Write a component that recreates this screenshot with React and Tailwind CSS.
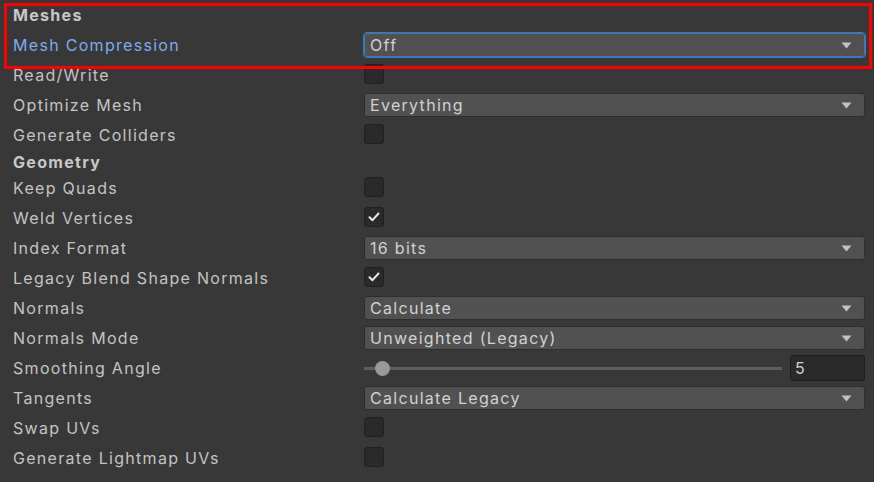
import React from "react";

const rows = [
  { type: "heading", label: "Meshes", first: true },
  { type: "select", label: "Mesh Compression", value: "Off", focused: true },
  { type: "check", label: "Read/Write", checked: false },
  { type: "select", label: "Optimize Mesh", value: "Everything" },
  { type: "check", label: "Generate Colliders", checked: false },
  { type: "heading", label: "Geometry" },
  { type: "check", label: "Keep Quads", checked: false },
  { type: "check", label: "Weld Vertices", checked: true },
  { type: "select", label: "Index Format", value: "16 bits" },
  { type: "check", label: "Legacy Blend Shape Normals", checked: true },
  { type: "select", label: "Normals", value: "Calculate" },
  { type: "select", label: "Normals Mode", value: "Unweighted (Legacy)" },
  { type: "slider", label: "Smoothing Angle", value: "5" },
  { type: "select", label: "Tangents", value: "Calculate Legacy" },
  { type: "check", label: "Swap UVs", checked: false },
  { type: "check", label: "Generate Lightmap UVs", checked: false },
];

function Arrow() {
  return (
    <svg width="11" height="7" viewBox="0 0 11 7" className="shrink-0">
      <path d="M0.5 0.5 L10.5 0.5 L5.5 6.5 Z" fill="#c2c2c2" />
    </svg>
  );
}

function Select({ value, focused }) {
  return (
    <div
      className={`flex h-[24px] flex-1 items-center justify-between rounded-[3px] border bg-[#515151] pl-[5px] pr-[12px] ${
        focused ? "border-[#3a79bb] outline outline-1 outline-[#3a79bb]" : "border-[#2e2e2e]"
      }`}
    >
      <span className="text-[#d2d2d2]">{value}</span>
      <Arrow />
    </div>
  );
}

function Check({ checked }) {
  return (
    <div className="mb-[2px] flex h-[20px] w-[20px] items-center justify-center rounded-[3px] border border-[#202020] bg-[#2a2a2a]">
      {checked && (
        <svg width="12" height="10" viewBox="0 0 12 10">
          <path d="M1.5 5.2 L4.5 8.2 L10.5 1.5" fill="none" stroke="#e8e8e8" strokeWidth="2" strokeLinecap="round" strokeLinejoin="round" />
        </svg>
      )}
    </div>
  );
}

function Slider({ value }) {
  return (
    <div className="flex flex-1 items-center gap-[8px]">
      <div className="relative flex h-[16px] flex-1 items-center">
        <div className="h-[3px] w-full bg-[#5e5e5e]" />
        <div className="absolute left-[11px] h-[15px] w-[15px] rounded-full bg-[#999999]" />
      </div>
      <div className="flex h-[26px] w-[75px] items-center rounded-[3px] border border-[#1e1e1e] bg-[#2a2a2a] pl-[4px] text-[#d2d2d2]">
        {value}
      </div>
    </div>
  );
}

export default function App() {
  return (
    <div
      className="relative h-[482px] w-[874px] overflow-hidden bg-[#383838] text-[16px] tracking-[1.3px] text-[#c4c4c4]"
      style={{ fontFamily: "Inter, 'Noto Sans', sans-serif" }}
    >
      <div className="flex flex-col">
        {rows.map((row) =>
          row.type === "heading" ? (
            <div
              key={row.label}
              className={`flex items-center pl-[13px] font-bold text-[#c8c8c8] ${row.first ? "h-[30px]" : "h-[23px]"}`}
            >
              {row.label}
            </div>
          ) : (
            <div key={row.label} className="flex h-[30px] items-center pr-[9px]">
              <div
                className={`w-[364px] shrink-0 pl-[13px] ${row.focused ? "text-[#7bacf0]" : ""}`}
              >
                {row.label}
              </div>
              {row.type === "select" && <Select value={row.value} focused={row.focused} />}
              {row.type === "check" && <Check checked={row.checked} />}
              {row.type === "slider" && <Slider value={row.value} />}
            </div>
          )
        )}
      </div>
      <div className="pointer-events-none absolute left-[4px] top-[3px] h-[66px] w-[868px] border-[3px] border-[#ff0000]" />
    </div>
  );
}
